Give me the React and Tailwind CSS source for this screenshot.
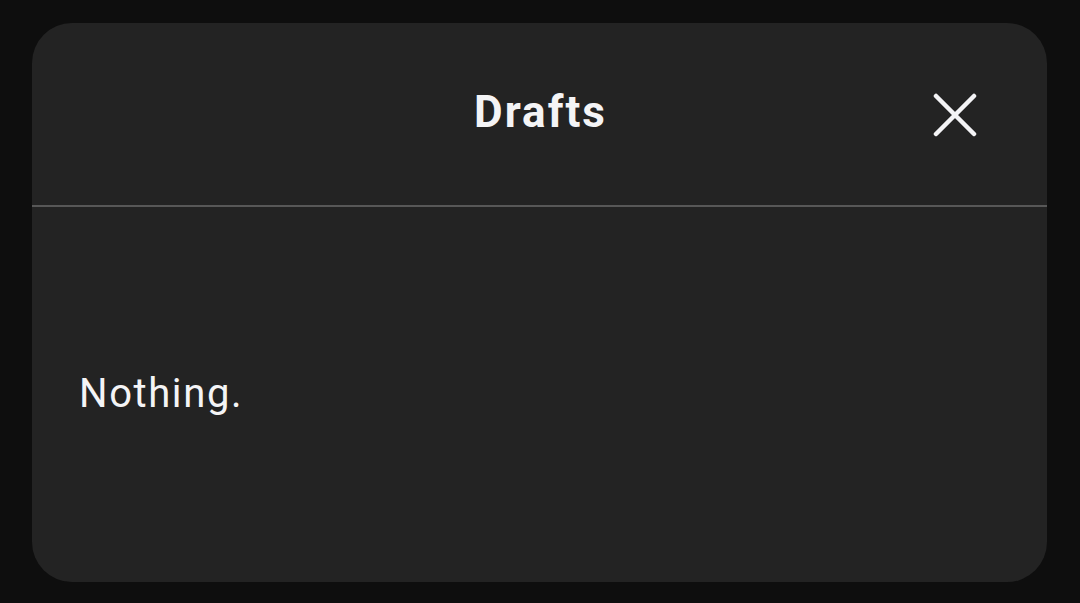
import React from 'react';

export default function App() {
  return (
    <div className="h-[603px] w-[1080px] bg-[#0e0e0e] pt-[23px] pl-[32px] pr-[33px] pb-[21px]" style={{ fontFamily: 'Roboto, "Noto Sans", sans-serif' }}>
      <div className="h-full w-full bg-[#232323] rounded-[40px] flex flex-col overflow-hidden">
        {/* Header */}
        <div className="relative h-[182px] flex items-center justify-center shrink-0">
          <h1 className="text-[44px] font-bold text-[#f4f4f6] leading-none tracking-[2px] mt-[-4px] pl-[2px]">Drafts</h1>
          <button className="absolute right-[64px] top-[64px] w-[56px] h-[56px] flex items-center justify-center">
            <svg width="44" height="44" viewBox="0 0 44 44" fill="none" stroke="#f4f4f6" strokeWidth="4.5" strokeLinecap="round">
              <path d="M3 3 L41 41 M41 3 L3 41" />
            </svg>
          </button>
        </div>
        <div className="h-[2px] bg-[#575757] shrink-0" />
        {/* Body */}
        <div className="flex-1 flex items-center px-[47px]">
          <p className="text-[40px] text-[#f4f4f6] leading-none tracking-[1.6px] mt-[-2px]">Nothing.</p>
        </div>
      </div>
    </div>
  );
}
